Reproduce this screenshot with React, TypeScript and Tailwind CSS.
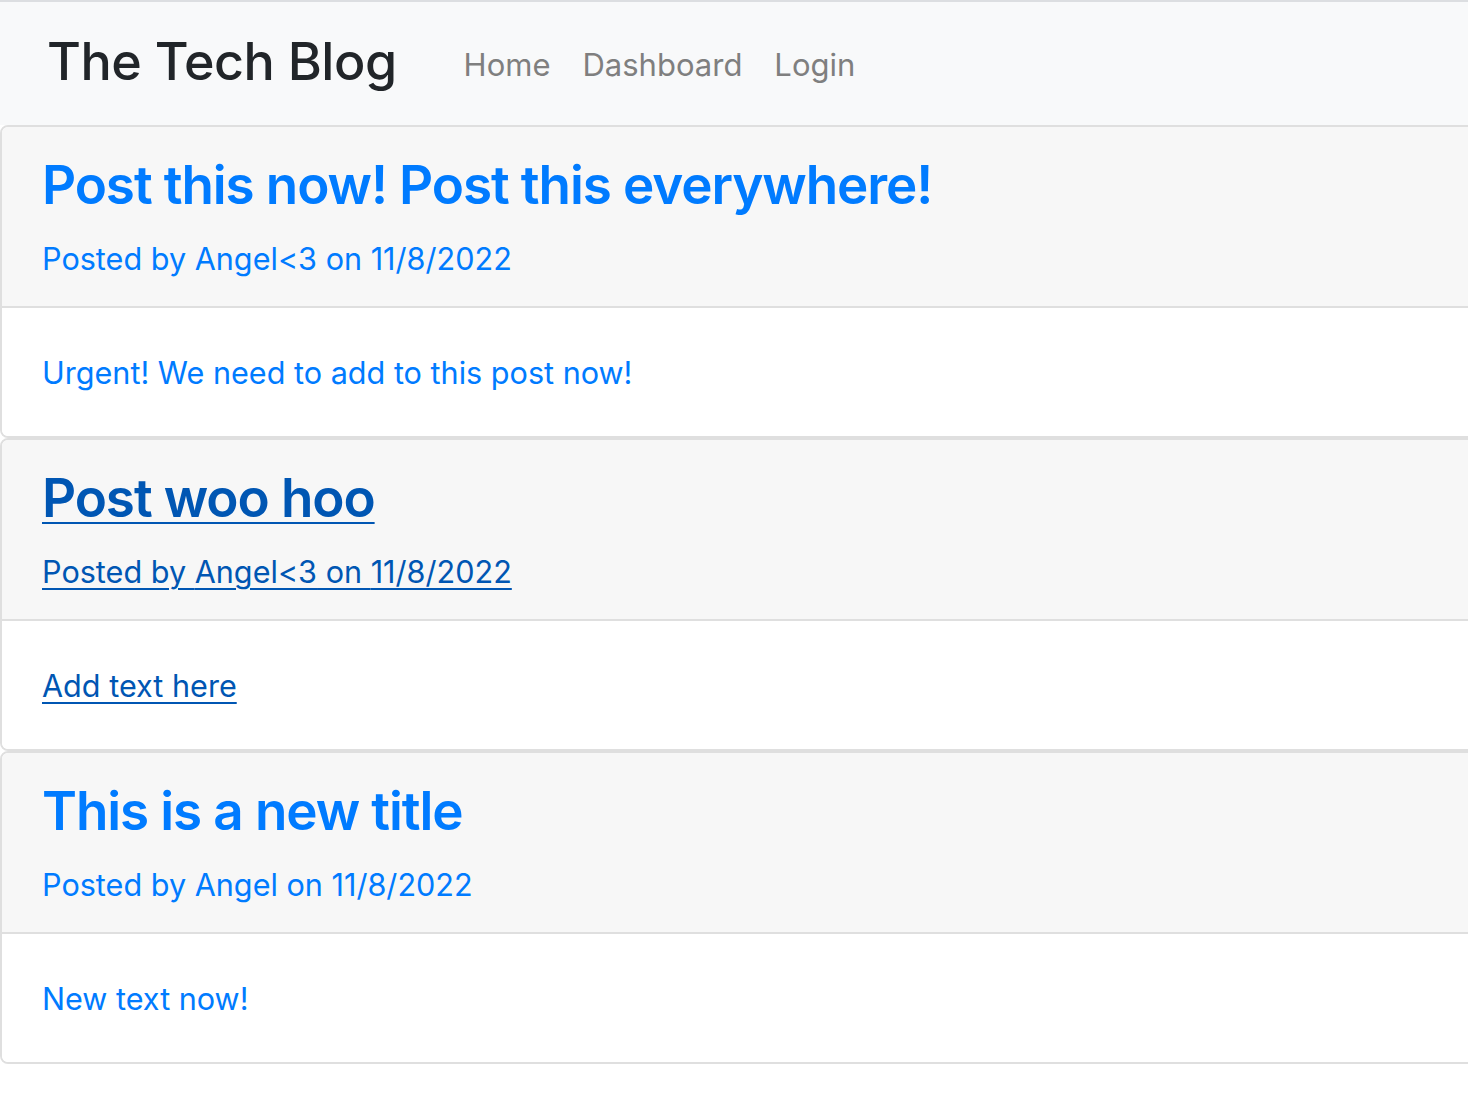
import React from "react";

const posts = [
  { title: "Post this now! Post this everywhere!", by: "Angel<3", date: "11/8/2022", body: "Urgent! We need to add to this post now!", hover: false },
  { title: "Post woo hoo", by: "Angel<3", date: "11/8/2022", body: "Add text here", hover: true },
  { title: "This is a new title", by: "Angel", date: "11/8/2022", body: "New text now!", hover: false },
];

export default function App() {
  return (
    <div className="w-full min-h-[1118px] bg-white overflow-hidden" style={{ fontFamily: "Inter, 'Noto Sans', sans-serif" }}>
      <nav className="h-[125px] border-t-2 border-[#dcdee1] bg-[#f8f9fa] flex items-center pl-[47px]">
        <span className="text-[52px] font-medium text-[#212529] tracking-[-0.5px] leading-none mt-[-4px]">The Tech Blog</span>
        <div className="flex items-center ml-[51px] mt-[3px] text-[31px] text-[#7f7f7f]">
          <span className="px-[16px]">Home</span>
          <span className="px-[16px]">Dashboard</span>
          <span className="px-[16px]">Login</span>
        </div>
      </nav>
      <div className="flex flex-col">
        {posts.map((p, i) => (
          <a
            key={i}
            className={`block mr-[-20px] border-2 border-[#dfdfdf] rounded-[8px] overflow-hidden ${p.hover ? "text-[#0056b3] underline underline-offset-[5px] decoration-2" : "text-[#007bff]"}`}
          >
            <div className="bg-[#f7f7f7] border-b-2 border-[#dfdfdf] px-[40px] pt-[25px] pb-[23px]">
              <h3 className="text-[53px] font-semibold leading-[67px] tracking-[-1.1px] mb-[16px]">{p.title}</h3>
              <p className="text-[30.6px] leading-[48px]">Posted by {p.by} on {p.date}</p>
            </div>
            <div className="bg-white px-[40px] pt-[41px] pb-[39px]">
              <p className="text-[30.6px] leading-[48px]">{p.body}</p>
            </div>
          </a>
        ))}
      </div>
    </div>
  );
}
